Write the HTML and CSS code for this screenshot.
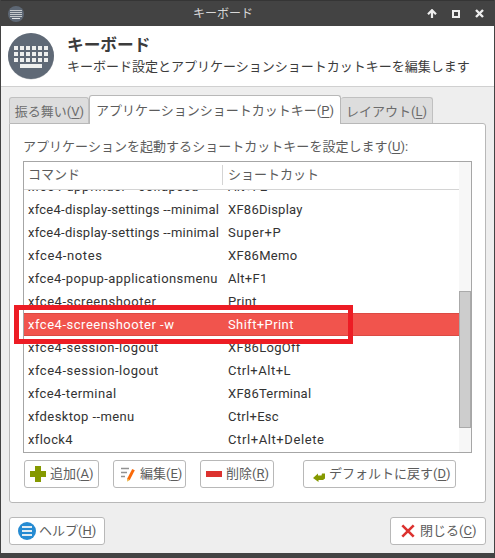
FILE: index.html
```html
<!DOCTYPE html>
<html lang="ja">
<head>
<meta charset="utf-8">
<title>キーボード</title>
<link rel="stylesheet" href="styles.css">
</head>
<body>
<div class="window">
  <header class="titlebar">
    <svg class="title-icon" width="16" height="16" viewBox="0 0 16 16"><circle cx="8" cy="8" r="8" fill="#5d6774"/><path d="M2 4.5h12M2 6.5h12M2 8.5h12M2 10.5h12" stroke="#c4c8cb" stroke-width="1"/><path d="M4 12.5h8" stroke="#e2e4e5" stroke-width="1"/></svg>
    <span class="title-text">キーボード</span>
    <div class="controls">
      <svg width="10" height="9" viewBox="0 0 10 9"><path d="M5 9V2M1 5.2l4-4 4 4" fill="none" stroke="#eee" stroke-width="2.2"/></svg>
      <svg width="8" height="8" viewBox="0 0 8 8"><path d="M1 1h6v6H1z" fill="none" stroke="#eee" stroke-width="2"/></svg>
      <svg width="9" height="9" viewBox="0 0 9 9"><path d="M1 1l7 7M8 1L1 8" stroke="#eee" stroke-width="2.4"/></svg>
    </div>
  </header>
  <section class="banner">
    <svg class="banner-icon" width="48" height="48" viewBox="0 0 48 48">
      <circle cx="25" cy="24.6" r="23" fill="#c8cacc"/><circle cx="25" cy="24" r="23" fill="#5f6976"/>
      <g stroke="#eeefee" stroke-width="4" stroke-dasharray="4 2"><path d="M8 16h34M8 22h34M8 28h34"/></g>
      <path d="M14 34h22" stroke="#eeefee" stroke-width="4"/>
    </svg>
    <div>
      <h1>キーボード</h1>
      <p>キーボード設定とアプリケーションショートカットキーを編集します</p>
    </div>
  </section>
  <main class="content">
    <nav class="tabs">
      <div class="tab first">振る舞い(<u>V</u>)</div>
      <div class="tab active">アプリケーションショートカットキー(<u>P</u>)</div>
      <div class="tab last">レイアウト(<u>L</u>)</div>
    </nav>
    <section class="page">
      <p class="label">アプリケーションを起動するショートカットキーを設定します(<u>U</u>):</p>
      <div class="list">
        <div class="table">
          <div class="head"><span class="col">コマンド</span><span>ショートカット</span></div>
          <div class="rows">
            <div class="row clipped"><span class="wide">xfce4-appfinder --collapsed</span><span>Alt+F2</span></div>
            <div class="row"><span class="tight">xfce4-display-settings --minimal</span><span class="tight">XF86Display</span></div>
            <div class="row"><span class="tight">xfce4-display-settings --minimal</span><span class="wider">Super+P</span></div>
            <div class="row"><span class="wider">xfce4-notes</span><span>XF86Memo</span></div>
            <div class="row"><span class="medium">xfce4-popup-applicationsmenu</span><span>Alt+F1</span></div>
            <div class="row"><span class="wide">xfce4-screenshooter</span><span>Print</span></div>
            <div class="row selected"><span class="wide">xfce4-screenshooter -w</span><span class="medium">Shift+Print</span></div>
            <div class="row"><span class="wide">xfce4-session-logout</span><span>XF86LogOff</span></div>
            <div class="row"><span class="wide">xfce4-session-logout</span><span class="wide">Ctrl+Alt+L</span></div>
            <div class="row"><span class="medium">xfce4-terminal</span><span class="tight">XF86Terminal</span></div>
            <div class="row"><span class="medium">xfdesktop --menu</span><span>Ctrl+Esc</span></div>
            <div class="row"><span class="medium">xflock4</span><span class="wider">Ctrl+Alt+Delete</span></div>
          </div>
        </div>
        <div class="scrollbar"><div class="thumb"></div></div>
      </div>
      <div class="actions">
        <button class="add"><svg width="16" height="16" viewBox="0 0 16 16"><path d="M5 0h6v5h5v6h-5v5H5v-5H0V5h5z" fill="#859900"/></svg><span>追加(<u>A</u>)</span></button>
        <button class="edit"><svg width="16" height="16" viewBox="0 0 16 16"><path d="M1 2.5h8M1 6.5h6M1 10.5h4" stroke="#929292" stroke-width="1.6"/><path d="M12.2 3l2.6 1.2L9.8 14l-2.6.8.2-2.6z" fill="#fa6a0a"/><path d="M7.4 12.4l-.3 3.4 2.5-1.8z" fill="#e9c35b"/></svg><span>編集(<u>E</u>)</span></button>
        <button class="remove"><svg width="16" height="16" viewBox="0 0 16 16"><path d="M0 5h16v6H0z" fill="#dc322f"/></svg><span>削除(<u>R</u>)</span></button>
        <button class="reset"><svg width="16" height="16" viewBox="0 0 16 16"><path d="M1 12l5-4.5v2h3.5l.5-2h3v5l-2 1.5H6.500v2z" fill="#859900"/></svg><span>デフォルトに戻す(<u>D</u>)</span></button>
      </div>
    </section>
    <footer class="footer">
      <button class="help"><svg width="18" height="18" viewBox="0 0 18 18"><circle cx="9" cy="9" r="9" fill="#268bd2"/><path d="M4 5h10M4 9h10M4 13h10" stroke="#e4edf3" stroke-width="2"/></svg><span>ヘルプ(<u>H</u>)</span></button>
      <button class="close"><svg width="14" height="14" viewBox="0 0 14 14"><path d="M1.300 1.300l11.400 11.400M12.700 1.300L1.300 12.700" stroke="#dc322f" stroke-width="2.6"/></svg><span>閉じる(<u>C</u>)</span></button>
    </footer>
  </main>
</div>
<div class="highlight"></div>
</body>
</html>
```
FILE: styles.css
```css
* { box-sizing: border-box; }
body {
  margin: 0;
  font: 13px/20px Roboto, "Noto Sans CJK JP", sans-serif;
  color: #5c5c5c;
}
h1, p { margin: 0; white-space: nowrap; }
u { text-underline-offset: 2px; text-decoration-thickness: 1px; text-decoration-skip-ink: none; }
.window {
  width: 495px;
  height: 558px;
  background: #eee;
  border: solid #434343;
  border-width: 0 1px 5px;
  display: flex;
  flex-direction: column;
}
.titlebar {
  height: 26px;
  flex: none;
  background: #434343;
  border-top: 1px solid #353535;
  color: #d8d8d8;
  display: grid;
  grid-template-columns: 56px 1fr 105px;
  align-items: center;
}
.title-icon { margin-left: 7px; }
.title-text { text-align: center; font-size: 12px; }
.controls { display: flex; align-items: center; justify-content: flex-end; gap: 15px; padding-right: 10px; }
.banner {
  height: 61px;
  flex: none;
  background: #fff;
  border-bottom: 1px solid #d0d0d0;
  padding: 6px 0 0 5px;
  display: flex;
  gap: 13px;
  color: #3c3c3c;
}
.banner h1 { font-size: 16.7px; line-height: 24px; margin-top: 2px; }
.banner p { line-height: 18px; }
.content { padding: 8px 8px 0; display: flex; flex-direction: column; }
.tabs { display: flex; align-items: flex-end; height: 28px; }
.tab {
  height: 26px;
  border: 1px solid #c0c0c0;
  border-bottom: 0;
  border-radius: 3px 3px 0 0;
  background: #ddd;
  color: #6c6c6c;
  padding-top: 4px;
  text-align: center;
  white-space: nowrap;
}
.tab.first { width: 80px; padding-left: 1px; }
.tab.active { width: 252px; height: 29px; background: #fff; color: #5c5c5c; margin-bottom: -1px; z-index: 1; padding-top: 5px; border-color: #b8b8b8; }
.tab.last { width: 92px; border-left: 0; }
.page {
  height: 380px;
  background: #fff;
  border: 1px solid #b8b8b8;
  border-radius: 0 3px 3px 3px;
  padding: 13px 13px 0;
}
.label { height: 24px; letter-spacing: .03px; }
.list { display: flex; width: 449px; height: 292px; border: 1px solid #a6a6a6; }
.table { width: 435px; height: 290px; display: flex; flex-direction: column; }
.head {
  height: 28px;
  flex: none;
  border-bottom: 1px solid #d4d4d4;
  display: grid;
  grid-template-columns: 199px 1fr;
  align-items: center;
  padding-bottom: 1px;
}
.head span { padding-left: 5px; height: 20px; }
.head .col { border-right: 1px solid #d4d4d4; padding-left: 4px; }
.rows { flex: 1; overflow: hidden; color: #333; }
.row {
  height: 23px;
  display: grid;
  grid-template-columns: 200px 1fr;
  padding-left: 4px;
  line-height: 23px;
  white-space: pre;
  letter-spacing: .3px;
}
.tight { letter-spacing: .25px; }
.medium { letter-spacing: .4px; }
.wide { letter-spacing: .52px; }
.wider { letter-spacing: .6px; }
.row.clipped { margin-top: -15px; }
.row.selected { background: #f1544d; color: #fff; box-shadow: inset 0 1px #db4a43, inset 0 -1px #db4a43; }
.scrollbar { width: 12px; background: #f7f7f7; padding-top: 129px; }
.thumb { height: 137px; background: #cdcdcd; border: 1px solid #aaa; }
.actions { display: flex; gap: 14px; padding: 7px 0 0 1px; }
button {
  height: 28px;
  background: #fff;
  border: 1px solid #b8b8b8;
  border-radius: 3px;
  padding: 0 0 0 5px;
  font: inherit;
  color: #5c5c5c;
  display: flex;
  align-items: center;
  gap: 5px;
  white-space: nowrap;
}
.add { width: 75px; gap: 4px; }
.edit { width: 73px; padding-left: 6px; gap: 4px; }
.remove { width: 74px; gap: 4px; }
.reset { width: 153px; margin-left: 15px; padding-left: 8px; gap: 1px; }
.footer { display: flex; justify-content: space-between; padding-top: 14px; }
.help { width: 96px; padding-left: 8px; gap: 3px; }
.close { width: 96px; padding-left: 10px; }
.highlight {
  position: absolute;
  left: 14px;
  top: 305px;
  width: 339px;
  height: 39px;
  border: 5px solid #ed1c24;
}
```
